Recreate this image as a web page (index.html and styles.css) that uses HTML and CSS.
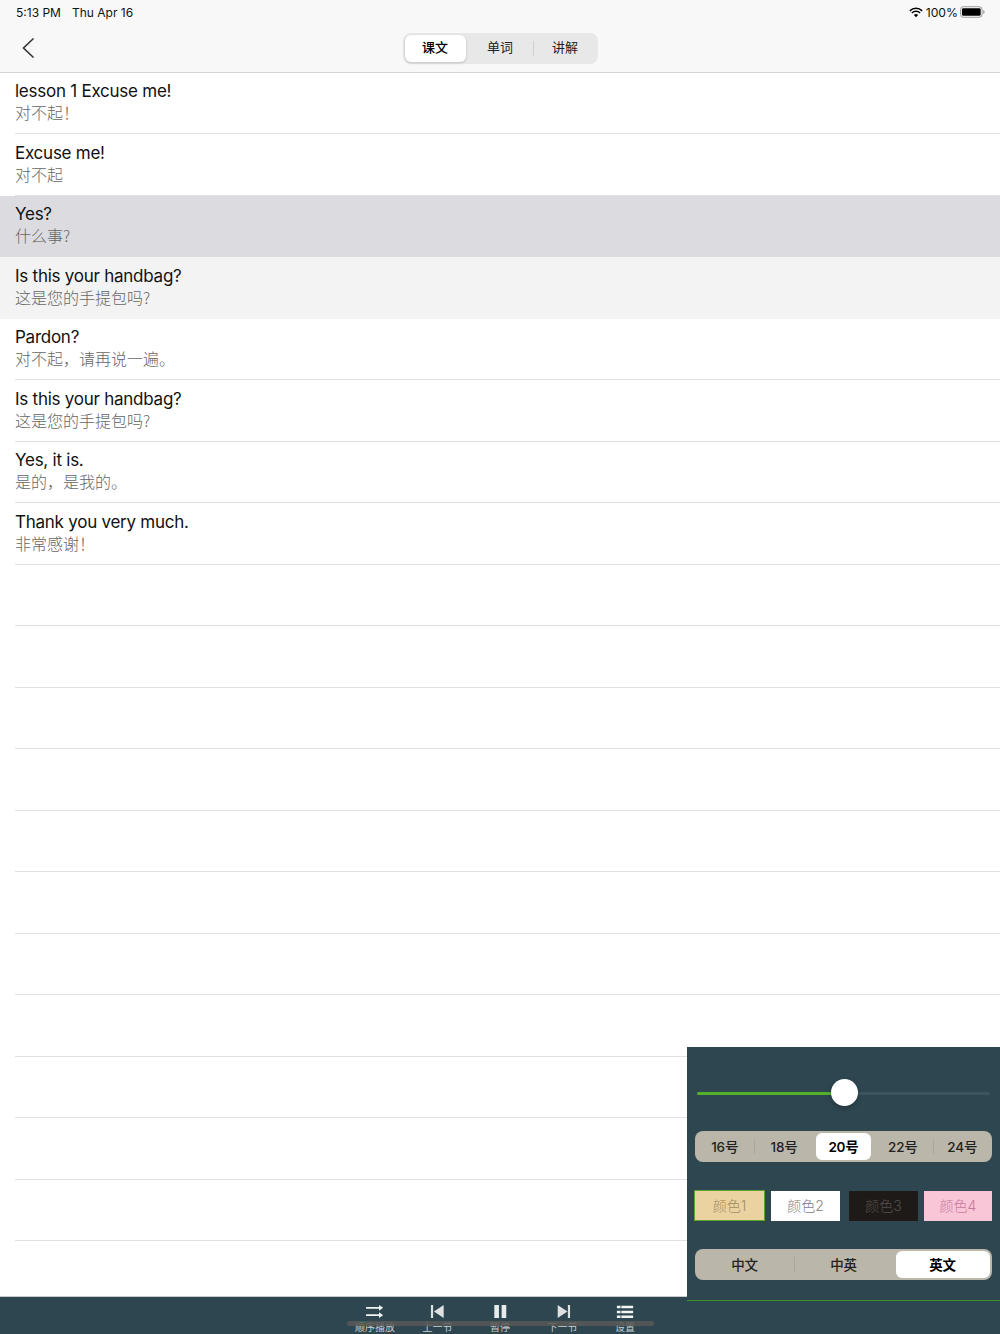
FILE: index.html
```html
<!DOCTYPE html>
<html lang="zh">
<head>
    <meta charset="UTF-8">
    <meta name="viewport" content="width=device-width, initial-scale=1.0">
    <title>lesson 1</title>
    <link rel="stylesheet" href="styles.css">
</head>
<body>
<div class="screen">
    <header class="top">
        <div class="status">
            <span class="time">5:13 PM</span>
            <span class="date">Thu Apr 16</span>
            <span class="status-right">
                <svg class="wifi" viewBox="0 0 16 12" width="14" height="11">
                    <path d="M8 11.5 5.6 8.9a3.4 3.4 0 0 1 4.8 0z" fill="#000"/>
                    <path d="M3.9 7.2a5.8 5.8 0 0 1 8.2 0l1.2-1.3a7.6 7.6 0 0 0-10.6 0z" fill="#000"/>
                    <path d="M1.6 4.8a9 9 0 0 1 12.8 0l1.2-1.3A10.8 10.8 0 0 0 .4 3.5z" fill="#000"/>
                </svg>
                <span class="battery-text">100%</span>
                <svg class="battery" viewBox="0 0 26 12" width="25" height="12">
                    <rect x="0.5" y="0.5" width="22.5" height="11" rx="3" fill="none" stroke="#999"/>
                    <rect x="2" y="2" width="19.5" height="8" rx="1.5" fill="#000"/>
                    <path d="M24.2 4v4c.9-.3 1.4-1.1 1.4-2s-.5-1.7-1.4-2z" fill="#999"/>
                </svg>
            </span>
        </div>
        <nav class="nav">
            <svg class="back" viewBox="0 0 14 22" width="14" height="22">
                <path d="M12.5 1.5 2.5 11l10 9.5" fill="none" stroke="#333" stroke-width="1.6"/>
            </svg>
            <div class="tabs">
                <span class="tab active">课文</span>
                <span class="tab">单词</span>
                <span class="tab tab-split">讲解</span>
            </div>
        </nav>
    </header>

    <main class="list">
        <div class="row"><div class="row-in"><p class="en">lesson 1 Excuse me!</p><p class="cn">对不起！</p></div></div>
        <div class="row"><div class="row-in"><p class="en">Excuse me!</p><p class="cn">对不起</p></div></div>
        <div class="row current"><div class="row-in"><p class="en">Yes?</p><p class="cn">什么事?</p></div></div>
        <div class="row next"><div class="row-in"><p class="en">Is this your handbag?</p><p class="cn">这是您的手提包吗?</p></div></div>
        <div class="row"><div class="row-in"><p class="en">Pardon?</p><p class="cn">对不起，请再说一遍。</p></div></div>
        <div class="row"><div class="row-in"><p class="en">Is this your handbag?</p><p class="cn">这是您的手提包吗?</p></div></div>
        <div class="row"><div class="row-in"><p class="en">Yes, it is.</p><p class="cn">是的，是我的。</p></div></div>
        <div class="row"><div class="row-in"><p class="en">Thank you very much.</p><p class="cn">非常感谢！</p></div></div>
        <div class="row"><div class="row-in"></div></div>
        <div class="row"><div class="row-in"></div></div>
        <div class="row"><div class="row-in"></div></div>
        <div class="row"><div class="row-in"></div></div>
        <div class="row"><div class="row-in"></div></div>
        <div class="row"><div class="row-in"></div></div>
        <div class="row"><div class="row-in"></div></div>
        <div class="row"><div class="row-in"></div></div>
        <div class="row"><div class="row-in"></div></div>
        <div class="row"><div class="row-in"></div></div>
        <div class="row"><div class="row-in"></div></div>
        <div class="row"><div class="row-in"></div></div>
    </main>

    <footer class="player">
        <div class="btn">
            <svg viewBox="0 0 24 16" width="24" height="16">
                <path d="M1 3.5h17M1 12.5h17" stroke="#f2f4f4" stroke-width="2"/>
                <path d="M17 0l5 3.5-5 3.5zM17 9l5 3.5-5 3.5z" fill="#f2f4f4"/>
            </svg>
            <span>顺序播放</span>
        </div>
        <div class="btn">
            <svg viewBox="0 0 24 16" width="24" height="16">
                <path d="M3.3 0H6v16H3.3zM19 0v16L7 8z" fill="#dde1e2"/>
            </svg>
            <span>上一节</span>
        </div>
        <div class="btn">
            <svg viewBox="0 0 24 16" width="24" height="16">
                <path d="M5 0h5.7v16H5zM14 0h5.7v16H14z" fill="#e8ebec"/>
            </svg>
            <span>暂停</span>
        </div>
        <div class="btn">
            <svg viewBox="0 0 24 16" width="24" height="16">
                <path d="M5.5 0v16l12-8zM18 0h2.7v16H18z" fill="#dde1e2"/>
            </svg>
            <span>下一节</span>
        </div>
        <div class="btn">
            <svg viewBox="0 0 24 16" width="24" height="16">
                <path d="M2 1h4.5v3H2zM7.5 1H22v3H7.5zM2 7h4.5v3H2zM7.5 7H22v3H7.5zM2 13h4.5v3H2zM7.5 13H22v3H7.5z" fill="#f2f4f4"/>
            </svg>
            <span>设置</span>
        </div>
        <div class="scroll-bar"></div>
    </footer>

    <aside class="panel">
        <div class="slider">
            <div class="slider-fill"></div>
            <div class="slider-thumb"></div>
        </div>
        <div class="seg seg-size">
            <span class="seg-item">16号</span>
            <span class="seg-item split">18号</span>
            <span class="seg-item on">20号</span>
            <span class="seg-item">22号</span>
            <span class="seg-item split">24号</span>
        </div>
        <div class="swatches">
            <span class="swatch c1">颜色1</span>
            <span class="swatch c2">颜色2</span>
            <span class="swatch c3">颜色3</span>
            <span class="swatch c4">颜色4</span>
        </div>
        <div class="seg seg-lang">
            <span class="seg-item">中文</span>
            <span class="seg-item split">中英</span>
            <span class="seg-item on">英文</span>
        </div>
    </aside>
</div>
</body>
</html>
```

FILE: styles.css
```css
* {
    margin: 0;
    padding: 0;
    box-sizing: border-box;
}

body {
    font-family: Inter, "Noto Sans CJK SC", sans-serif;
    background: #fff;
    color: #111;
}

.screen {
    position: relative;
    width: 1000px;
    height: 1334px;
    overflow: hidden;
    display: flex;
    flex-direction: column;
}

/* top bar */
.top {
    height: 72.5px;
    flex: none;
    background: #f8f8f8;
    border-bottom: 1px solid #d4d4d4;
}

.status {
    height: 24px;
    padding: 0 15px 0 16px;
    display: flex;
    align-items: center;
    font-size: 12px;
    color: #111;
}

.date {
    margin-left: 11px;
}

.status-right {
    margin-left: auto;
    display: flex;
    align-items: center;
    gap: 4px;
}

.wifi {
    margin-right: -1px;
}

.battery-text {
    font-size: 12.2px;
}

.battery {
    margin-left: -2px;
}

.nav {
    height: 48px;
    position: relative;
    display: flex;
    justify-content: center;
    align-items: center;
}

.back {
    position: absolute;
    left: 21px;
    top: 13px;
}

.tabs {
    width: 195px;
    height: 31px;
    padding: 2px 0 2px 2px;
    background: #e8e8e8;
    border-radius: 8px;
    display: flex;
}

.tab {
    flex: none;
    width: 65px;
    padding-bottom: 3px;
    display: flex;
    align-items: center;
    justify-content: center;
    font-size: 13px;
    color: #222;
}

.tab.active {
    width: 61px;
    margin-right: 2px;
    background: #fff;
    border-radius: 6px;
    box-shadow: 0 1px 3px rgba(0, 0, 0, 0.18);
    font-weight: 500;
    color: #000;
}

.tab-split {
    position: relative;
}

.tab-split::before {
    content: "";
    position: absolute;
    left: 0;
    top: 6px;
    bottom: 6px;
    width: 1px;
    background: #cfcfcf;
}

/* lesson rows */
.list {
    flex: 1;
    min-height: 0;
    overflow: hidden;
}

.row {
    height: 61.5px;
    padding-left: 15px;
}

.row-in {
    height: 100%;
    padding-top: 7.5px;
    border-bottom: 1px solid #e0e0e0;
}

.row.current {
    background: #dcdce0;
}

.row.next {
    background: #f3f3f4;
}

.row.current .row-in,
.row.next .row-in {
    border-bottom-color: transparent;
}

.en {
    font-family: Inter, sans-serif;
    font-size: 17px;
    letter-spacing: -0.25px;
    line-height: 22px;
    color: #111;
}

.cn {
    font-family: "Noto Sans CJK SC", sans-serif;
    font-size: 16px;
    font-weight: 300;
    line-height: 21px;
    color: #666;
}

/* bottom player */
.player {
    position: relative;
    height: 38px;
    flex: none;
    background: #2d4650;
    border-top: 1px solid #c8cccd;
    display: flex;
    justify-content: center;
    padding-top: 8px;
}

.btn {
    width: 62.5px;
    display: flex;
    flex-direction: column;
    align-items: center;
    flex: none;
}

.btn span {
    font-family: "Noto Sans CJK SC", sans-serif;
    font-size: 10px;
    line-height: 14px;
    margin-top: 2px;
    white-space: nowrap;
    color: #c8d0d3;
}

.scroll-bar {
    position: absolute;
    left: 347px;
    top: 24px;
    width: 307px;
    height: 5px;
    border-radius: 3px;
    background: rgba(88, 88, 86, 0.85);
}

/* settings panel */
.panel {
    position: absolute;
    right: 0;
    top: 1047px;
    width: 313px;
    height: 254px;
    background: #2d4650;
    border-bottom: 1px solid #3f8f2a;
    padding: 0 8px;
}

.slider {
    position: relative;
    height: 3px;
    margin: 45px 2px 0 2px;
    background: #3c545e;
    border-radius: 2px;
}

.slider-fill {
    width: 50%;
    height: 100%;
    background: #52b02a;
    border-radius: 2px;
}

.slider-thumb {
    position: absolute;
    left: 133.5px;
    top: -13px;
    width: 27px;
    height: 27px;
    border-radius: 50%;
    background: #fff;
    box-shadow: 0 2px 5px rgba(0, 0, 0, 0.25);
}

.seg {
    height: 31px;
    padding: 2px 0;
    background: #bab6aa;
    border-radius: 8px;
    display: grid;
}

.seg-size {
    grid-template-columns: repeat(5, 1fr);
    margin-top: 36px;
}

.seg-lang {
    grid-template-columns: repeat(3, 1fr);
    margin-top: 28px;
}

.seg-item {
    position: relative;
    padding-bottom: 2px;
    display: flex;
    align-items: center;
    justify-content: center;
    font-size: 13.5px;
    letter-spacing: -0.2px;
    font-weight: 500;
    color: #222;
}

.seg-item.on {
    margin: 0 2.5px;
    background: #fff;
    border-radius: 6px;
    color: #000;
    font-weight: 600;
}

.seg-item.split::before {
    content: "";
    position: absolute;
    left: 0;
    top: 6px;
    bottom: 6px;
    width: 1px;
    background: #aaa79b;
}

.swatches {
    display: flex;
    margin-top: 28px;
    height: 31px;
    align-items: flex-end;
}

.swatch {
    width: 69px;
    height: 30px;
    padding-bottom: 2px;
    display: flex;
    align-items: center;
    justify-content: center;
    font-size: 14px;
    font-weight: 300;
}

.c1 {
    width: 71px;
    height: 31px;
    margin-left: -1px;
    background: #ebd3a1;
    border: 1px solid #5aa52f;
    color: #a08e68;
}

.c2 {
    margin-left: 6px;
    background: #fff;
    color: #808080;
}

.c3 {
    margin-left: 9px;
    background: #1e1a18;
    color: #55504c;
}

.c4 {
    width: 68px;
    margin-left: 6px;
    background: #f9c6d8;
    color: #c9789a;
}
```
